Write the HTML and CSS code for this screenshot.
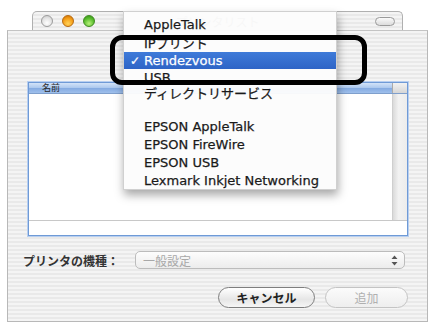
FILE: index.html
```html
<!DOCTYPE html>
<html lang="ja">
<head>
<meta charset="utf-8">
<link rel="stylesheet" href="styles.css">
</head>
<body>
<div class="page">
  <div class="titlebar">
    <div class="lights">
      <span class="light light-gray"></span>
      <span class="light light-orange"></span>
      <span class="light light-green"></span>
    </div>
    <div class="title">プリンタリスト</div>
    <div class="pill"></div>
  </div>
  <div class="window">
    <div class="list">
      <div class="list-head">
        <span class="col-name">名前</span>
        <span class="col-corner"></span>
      </div>
      <div class="list-body">
        <div class="rows"></div>
        <div class="scroller"></div>
      </div>
      <div class="list-foot"></div>
    </div>
    <div class="popup-row">
      <span class="label">プリンタの機種：</span>
      <div class="popup">
        <span class="popup-text">一般設定</span>
        <svg class="arrows" width="7" height="11" viewBox="0 0 7 11"><path d="M3.5 0.5 L6.5 4 L0.5 4 Z M3.5 10.5 L6.5 7 L0.5 7 Z" fill="#555"/></svg>
      </div>
    </div>
    <div class="buttons">
      <button class="btn btn-cancel">キャンセル</button>
      <button class="btn btn-add">追加</button>
    </div>
  </div>

  <div class="menu">
    <div class="item item-a">AppleTalk</div>
    <div class="item item-b">IPプリント</div>
    <div class="item item-c selected"><span class="check">✓</span>Rendezvous</div>
    <div class="item item-d">USB</div>
    <div class="item item-e">ディレクトリサービス</div>
    <div class="sep"></div>
    <div class="item">EPSON AppleTalk</div>
    <div class="item">EPSON FireWire</div>
    <div class="item">EPSON USB</div>
    <div class="item">Lexmark Inkjet Networking</div>
  </div>
  <div class="callout"></div>
</div>
</body>
</html>
```

FILE: styles.css
```css
* { box-sizing: border-box; }
html, body { margin: 0; padding: 0; background: #fff; }
body {
  width: 431px;
  height: 326px;
  overflow: hidden;
  font-family: "DejaVu Sans", "Noto Sans CJK JP", sans-serif;
}
.page {
  position: relative;
  padding-top: 11px;
}
.titlebar, .window {
  background: repeating-linear-gradient(to bottom, #f4f4f4 0 2px, #e9e9e9 2px 4px);
}
.titlebar {
  margin-left: 32px;
  width: 371px;
  height: 19px;
  border: 1px solid #b0b0b0;
  border-bottom: none;
  border-radius: 5px 5px 0 0;
  display: grid;
  grid-template-columns: 1fr auto 1fr;
  align-items: center;
}
.lights {
  display: flex;
  gap: 9px;
  padding-left: 8px;
}
.light {
  width: 12px;
  height: 12px;
  border-radius: 50%;
  display: block;
}
.light-gray {
  background: radial-gradient(circle at 50% 70%, #ffffff 0%, #e4e4e4 55%, #c4c4c4 100%);
  border: 1px solid #9c9c9c;
}
.light-orange {
  background: radial-gradient(circle at 50% 75%, #ffd25a 0%, #f5a01a 55%, #c86a00 100%);
  border: 1px solid #b86a10;
}
.light-green {
  background: radial-gradient(circle at 50% 75%, #b8f07a 0%, #5cbf30 55%, #2e8a12 100%);
  border: 1px solid #3f8a20;
}
.title {
  font-family: "Noto Sans CJK JP", sans-serif;
  font-size: 12px;
  color: #777;
}
.pill {
  justify-self: end;
  margin-right: 7px;
  width: 20px;
  height: 9px;
  border: 1px solid #9a9a9a;
  border-radius: 5px;
  background: linear-gradient(#fafafa, #dcdcdc);
}
.window {
  margin-left: 7px;
  width: 421px;
  height: 292px;
  border: 1px solid #b8b8b8;
  border-top-color: #c4c4c4;
  padding: 51px 19px 0 15px;
  display: flex;
  flex-direction: column;
}
.list {
  margin-left: 5px;
  width: 380px;
  height: 154px;
  border: 1px solid #6f9ad6;
  box-shadow: 0 0 0 1px #b8cff0;
  background: #fff;
  display: flex;
  flex-direction: column;
}
.list-head {
  height: 11px;
  display: flex;
  border-bottom: 1px solid #7f9fcc;
}
.col-name {
  flex: 1;
  background: linear-gradient(#d3e3f8 0%, #aecaef 45%, #86ace2 55%, #9fc0ec 100%);
  font-family: "Noto Sans CJK JP", sans-serif;
  font-size: 9px;
  line-height: 10px;
  color: #2a2a2a;
  padding-left: 13px;
}
.col-corner {
  width: 15px;
  background: linear-gradient(#f2f2f2, #d6d6d6);
  border-left: 1px solid #aaa;
}
.list-body {
  height: 127px;
  display: flex;
  border-bottom: 1px solid #c8c8c8;
}
.rows { flex: 1; }
.scroller {
  width: 15px;
  background: linear-gradient(to right, #dadada, #f2f2f2 40%, #ececec);
  border-left: 1px solid #cfcfcf;
}
.list-foot { flex: 1; }
.popup-row {
  margin-top: 15px;
  height: 18px;
  display: flex;
  align-items: center;
}
.label {
  width: 112px;
  flex: none;
  font-family: "Noto Sans CJK JP", sans-serif;
  font-weight: bold;
  font-size: 12px;
  color: #333;
}
.popup {
  width: 270px;
  height: 18px;
  border: 1px solid #bcbcbc;
  border-radius: 5px;
  background: linear-gradient(#fdfdfd, #ececec);
  display: flex;
  align-items: center;
  justify-content: space-between;
  padding: 0 6px 0 7px;
}
.popup-text {
  font-family: "Noto Sans CJK JP", sans-serif;
  font-size: 12px;
  color: #a8a8a8;
}
.buttons {
  margin-top: 18px;
  display: flex;
  justify-content: flex-end;
  gap: 10px;
}
.btn {
  height: 21px;
  border-radius: 11px;
  font-family: "Noto Sans CJK JP", sans-serif;
  font-size: 12px;
  padding: 0;
  line-height: 19px;
}
.btn-cancel {
  width: 97px;
  border: 1px solid #7e7e7e;
  background: linear-gradient(#ffffff, #e6e6e6 60%, #f6f6f6);
  color: #222;
  font-weight: bold;
}
.btn-add {
  width: 83px;
  border: 1px solid #c4c4c4;
  background: linear-gradient(#fbfbfb, #eeeeee);
  color: #b0b0b0;
}
.menu {
  position: absolute;
  left: 123px;
  top: 11px;
  width: 214px;
  height: 179px;
  padding-top: 3px;
  background: rgba(252, 252, 252, 0.96);
  border: 1px solid #d0d0d0;
  box-shadow: 1px 5px 9px rgba(0, 0, 0, 0.35);
}
.item {
  height: 18px;
  display: flex;
  align-items: center;
  padding-left: 20px;
  font-size: 13px;
  color: #1a1a1a;
  white-space: nowrap;
  -webkit-text-stroke: 0.25px #1a1a1a;
}
.item-b { height: 19px; }
.item-c { height: 17px; }
.item-d { height: 16px; }
.item-e { height: 15px; }
.sep { height: 17px; }
.selected {
  background: linear-gradient(#3f7bd9, #2e64c6);
  color: #fff;
  -webkit-text-stroke: 0.25px #fff;
}
.check {
  width: 14px;
  margin-left: -14px;
  font-size: 12px;
}
.callout {
  position: absolute;
  left: 110px;
  top: 35px;
  width: 257px;
  height: 50px;
  border: 5px solid #000;
  border-radius: 12px;
}
```
